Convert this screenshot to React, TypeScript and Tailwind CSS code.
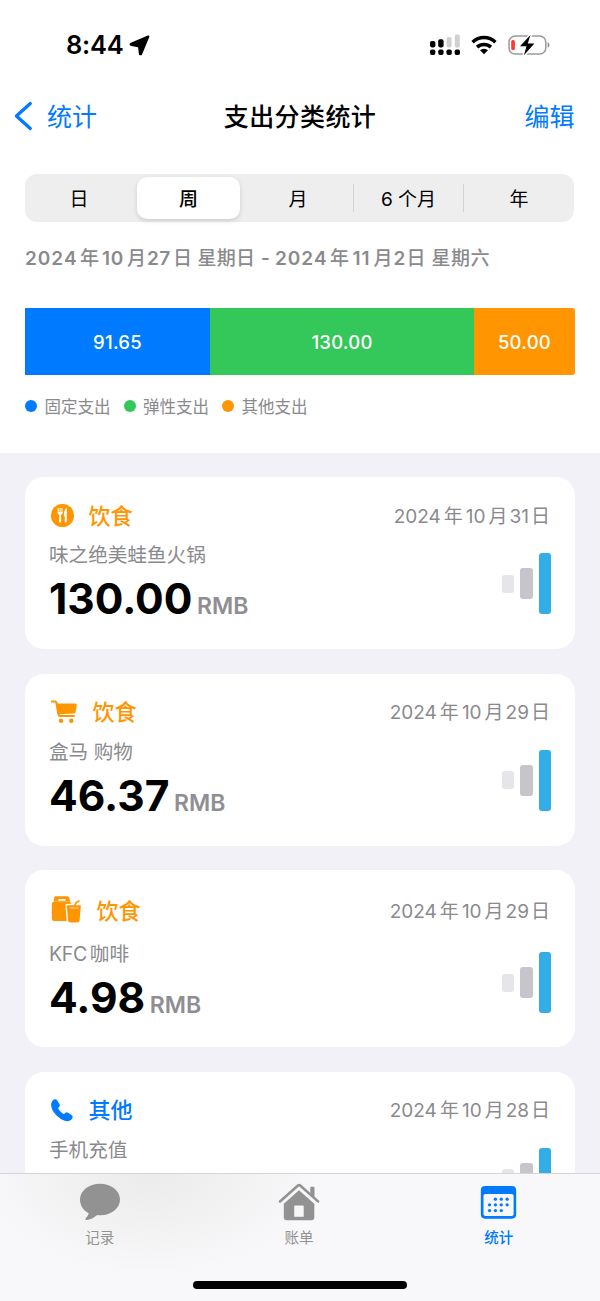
import type { ReactNode } from "react";

function LocationArrow() {
  return (
    <svg width="21" height="21" viewBox="0 0 21 21" className="ml-[5px]">
      <path d="M19.3 1.6 1.7 9l.1.7 8.3 1.800.9 7.700h.900Z" fill="#000" stroke="#000" strokeWidth="2.2" strokeLinejoin="round" />
    </svg>
  );
}

function Signal() {
  return (
    <svg width="31" height="22" viewBox="0 0 31 22">
      <g fill="#000">
        <rect x="0" y="7" width="5.4" height="6.4" rx="1.8" />
        <rect x="8.2" y="5.2" width="5.4" height="8.2" rx="1.8" />
        <rect x="0" y="15.6" width="5.4" height="5.4" rx="1.9" />
        <rect x="8.2" y="15.6" width="5.4" height="5.4" rx="1.9" />
        <rect x="16.4" y="15.6" width="5.4" height="5.4" rx="1.9" />
        <rect x="24.6" y="15.6" width="5.4" height="5.4" rx="1.9" />
      </g>
      <g fill="#d0d0d0">
        <rect x="16.6" y="3" width="5" height="10.4" rx="1.7" />
        <rect x="24.8" y="0.4" width="5" height="13" rx="1.7" />
      </g>
    </svg>
  );
}

function Wifi() {
  return (
    <svg width="26" height="20" viewBox="0 0 26 20" className="ml-[10px]">
      <g fill="none" stroke="#000" strokeWidth="3.5">
        <path d="M1.6 7.2a16.4 16.4 0 0 1 22.8 0" />
        <path d="M6.1 12.1a10.1 10.1 0 0 1 13.8 0" />
      </g>
      <path d="M13 19.2 9 15.2a5.9 5.9 0 0 1 8 0Z" fill="#000" />
    </svg>
  );
}

function Battery() {
  return (
    <svg width="43" height="22" viewBox="0 0 43 22" className="ml-[11px]">
      <rect x="1" y="1.9" width="36.8" height="18.2" rx="6.2" fill="none" stroke="#9a9a9a" strokeWidth="1.5" />
      <path d="M39.7 8.2c2.3.8 2.3 4.6 0 5.4Z" fill="#8c8c8c" />
      <rect x="3.2" y="6" width="3.7" height="10" rx="1.5" fill="#ff3b30" />
      <path d="M22.6.9 11.8 12.6h6.3l-2.2 8.8 10.6-11.8h-6.1Z" fill="#000" stroke="#fff" strokeWidth="2.8" strokeLinejoin="round" />
      <path d="M22.4 1 12 12.3h6.5l-2.6 8.9 10.5-11.6h-6.6Z" fill="#000" />
    </svg>
  );
}

function ForkKnife() {
  return (
    <svg width="25" height="25" viewBox="0 0 25 25">
      <circle cx="12.5" cy="12.5" r="11.6" fill="#ff9500" />
      <path d="M8.2 5.4v4.5M10.1 5.4v4.5M12 5.4v4.5" stroke="#fff" strokeWidth="1" strokeLinecap="round" />
      <path d="M7.7 9h4.8v.8c0 1.2-.8 1.8-1.5 2.2l.2 6.6c0 1.5-2.2 1.5-2.2 0l.2-6.6c-.8-.4-1.5-1-1.5-2.2Z" fill="#fff" />
      <path d="M16.8 5.3v13.2c0 1.6-2.1 1.6-2.1 0l.2-4.7-1-.6c-.2-3.1.7-6.3 2.1-7.9.3-.4.8-.4.8 0Z" fill="#fff" />
    </svg>
  );
}

function Cart() {
  return (
    <svg width="29" height="25" viewBox="0.800 0 28 25">
      <path d="M2.200 2.500h3.200c.8 0 1.100.4 1.300 1.200l2.100 12c.1.8.6 1.300 1.500 1.300h13.900" fill="none" stroke="#ff9500" strokeWidth="2.100" strokeLinecap="round" />
      <path d="M6.900 4.400h18.400c1.300 0 1.900.7 1.700 2l-1 6.100c-.2 1.300-1 2-2.300 2.100L8.700 15.300Z" fill="#ff9500" />
      <circle cx="11.300" cy="21.700" r="2.200" fill="#ff9500" />
      <circle cx="21.600" cy="21.700" r="2.200" fill="#ff9500" />
    </svg>
  );
}

function Takeout() {
  return (
    <svg width="33" height="28" viewBox="0.800 0.500 32 28">
      <path d="M6.200.7h11.200c1.300 0 1.800.6 2.200 1.800l1 3.500H4l.5-3.500C4.700 1.300 5.100.7 6.200.7Z" fill="#ff9500" />
      <path d="M4.100 6h15.800c1 .4 1.800 1.600 1.800 3.200v13.300c0 2-1.200 3.100-3.100 3.100H5.200c-2 0-3.100-1.100-3.100-3.100V9.200c0-1.600.8-2.800 2-3.200Z" fill="#ff9500" />
      <path d="M9.300 4.400h6" stroke="#fff" strokeWidth="1.600" strokeLinecap="round" />
      <path d="M16.900 8.200h6l1.800-3h5.800v3h1.300v19H19.200c-1.300 0-2-.7-2.200-2L15.800 11c-.2-1.600.1-2.400 1.100-2.800Z" fill="#fff" />
      <path d="M24.700 10.700 26.500 7l2.700-1.500" fill="none" stroke="#ff9500" strokeWidth="1.600" strokeLinecap="round" />
      <path d="M17.800 9.800h12.600c.5 0 .8.400.7.900l-1.200 14.100c-.1 1.400-1 2.200-2.300 2.200h-7c-1.300 0-2.100-.8-2.200-2.200l-1.300-14.100c0-.5.2-.9.700-.9Z" fill="#ff9500" />
      <path d="M20 12.500h8.400" stroke="#fff" strokeWidth=".6" strokeLinecap="round" />
    </svg>
  );
}

function Phone() {
  return (
    <svg width="25" height="24" viewBox="0.500 0 24 24">
      <path d="M2.600 2.800C4.300.9 6.100.9 7.200 2.600l2.100 3.100c.8 1.200.7 2.300-.3 3.300-.9.9-1 1.400-.4 2.300 1.200 1.800 2.600 3.200 4.200 4.300.8.6 1.300.5 2.200-.4 1-1 2.100-1.100 3.300-.3l3.100 2.100c1.700 1.100 1.800 2.800 0 4.500-2.700 2.700-6.400 2-10.900-.8C5.800 17.700 1.300 12 1.100 7.100c0-1.800.5-3.200 1.500-4.300Z" fill="#007aff" />
    </svg>
  );
}

function Bubble() {
  return (
    <svg width="42" height="38" viewBox="0 0 42 38">
      <path d="M21 .8C32.1.8 41 7.800 41 16.600S32.300 32.300 21.700 32.300c-1.200 0-2.300 0-3.300-.2-2.700 2.100-6.700 4.600-10.300 5-1.500.1-2.100-1-1.200-2.100 1.300-1.500 2.500-3.200 2.800-4.800C4.200 27.500 1 22.600 1 16.600 1 7.800 9.900.8 21 .8Z" fill="#929292" />
    </svg>
  );
}

function House() {
  return (
    <svg width="42" height="38" viewBox="0 0 42 38">
      <path d="M2 18.4 20.300 2.300c.5-.4 1.100-.4 1.600 0L40 18.400" fill="none" stroke="#929292" strokeWidth="2.600" strokeLinecap="round" strokeLinejoin="round" />
      <path d="M32.300 10V4.900c0-.8.3-1.100 1.100-1.100h2c.8 0 1.100.3 1.100 1.100v9.300Z" fill="#929292" />
      <path d="M21 7.300 36.300 20.700v13.500c0 2-1 3-3 3H8.800c-2 0-3-1-3-3V20.700Zm-3.800 15.300c-.7 0-1 .4-1 1v10.200h9.500V23.600c0-.6-.3-1-1-1Z" fill="#929292" fillRule="evenodd" />
    </svg>
  );
}

function Calendar() {
  const dots = [[15, 13.8], [20.7, 13.8], [26.4, 13.8], [9.3, 19.3], [15, 19.3], [20.7, 19.3], [26.4, 19.3], [9.3, 24.9], [15, 24.9], [20.7, 24.9]];
  return (
    <svg width="37" height="35" viewBox="0 0 36 34" className="ml-px">
      <path d="M5 1h26c2.800 0 4.200 1.400 4.200 4.200v23.300c0 2.800-1.400 4.200-4.200 4.200H5c-2.800 0-4.200-1.400-4.200-4.200V5.200C.8 2.400 2.200 1 5 1Zm.5 7.800c-1.500 0-2.100.7-2.100 2.100v17c0 1.400.7 2.200 2.100 2.200h25c1.500 0 2.200-.8 2.200-2.200v-17c0-1.400-.7-2.100-2.200-2.100Z" fill="#007aff" fillRule="evenodd" />
      {dots.map(([x, y]) => (
        <circle key={`${x}-${y}`} cx={x} cy={y} r="1.6" fill="#007aff" />
      ))}
    </svg>
  );
}

const rangeParts: [string, string][] = [
  ["2024", "w-[55px] tracking-[1px]"],
  ["年", "w-[22px]"],
  ["10", "w-[25px] tracking-[0.7px]"],
  ["月", "w-[20px]"],
  ["27", "w-[26px] tracking-[0.4px]"],
  ["日", "w-[24.5px]"],
  ["星期日", "w-[63.5px] tracking-[0.3px]"],
  ["-", "w-[14px]"],
  ["2024", "w-[55px] tracking-[1px]"],
  ["年", "w-[22.5px]"],
  ["11", "w-[21px] tracking-[1px]"],
  ["月", "w-[20px]"],
  ["2", "w-[13px]"],
  ["日", "w-[25px]"],
  ["星期六", "tracking-[0.5px]"],
];

type Entry = {
  icon: ReactNode;
  name: string;
  color: string;
  day: string;
  note: ReactNode;
  amount?: string;
  box: string;
  head: string;
};

const entries: Entry[] = [
  { icon: <ForkKnife />, name: "饮食", color: "text-[#ff9500]", day: "10-31", note: "味之绝美蛙鱼火锅", amount: "130.00", box: "h-[172px] pt-[22px]", head: "mb-[8px]" },
  { icon: <Cart />, name: "饮食", color: "text-[#ff9500]", day: "10-29", note: "盒马 购物", amount: "46.37", box: "h-[172px] pt-[22px]", head: "mb-[8px]" },
  { icon: <Takeout />, name: "饮食", color: "text-[#ff9500]", day: "10-29", note: <><span className="mr-[3px] tracking-[-0.4px]">KFC</span>咖啡</>, amount: "4.98", box: "h-[177px] pt-[24px]", head: "mb-[12px]" },
  { icon: <Phone />, name: "其他", color: "text-[#007aff]", day: "10-28", note: "手机充值", box: "h-[172px] pt-[22px]", head: "mb-[8px]" },
];

function Card({ entry }: { entry: Entry }) {
  const [month, day] = entry.day.split("-");
  return (
    <article className={`shrink-0 rounded-[19px] bg-white pr-[24px] pl-[25px] ${entry.box}`}>
      <header className={`flex h-8 items-center ${entry.head}`}>
        {entry.icon}
        <h2 className={`ml-[13.5px] pt-px text-[22px] leading-8 font-medium ${entry.color}`}>{entry.name}</h2>
        <p className="ml-auto pt-[4px] pr-px text-[19px] text-[#8a8a8e]">
          <span className="mr-[3px]">2024</span>年<span className="mx-[3px]">{month}</span>月<span className="mx-[2px]">{day}</span>日
        </p>
      </header>
      <div className="flex justify-between">
        <div className="-ml-px">
          <p className="h-8 text-[19.6px] leading-8 text-[#8a8a8e]">{entry.note}</p>
          {entry.amount && (
            <p className="flex h-[55px] items-baseline leading-[56px]">
              <span className="text-[42.5px] font-bold text-black">{entry.amount}</span>
              <span className="ml-[4.5px] text-[23px] font-semibold text-[#8e8e93]">RMB</span>
            </p>
          )}
        </div>
        <div className="mt-[14px] flex h-[61px] items-center gap-[6px]">
          <i className="h-[18px] w-[12.5px] rounded-[3px] bg-[#e5e5ea]" />
          <i className="h-[31px] w-[12.5px] rounded-[3px] bg-[#c5c5cb]" />
          <i className="h-[61px] w-[12.5px] rounded-[3px] bg-[#32ade6]" />
        </div>
      </div>
    </article>
  );
}

export default function App() {
  return (
    <div className="flex h-[1301px] w-[600px] flex-col overflow-hidden bg-white font-['Inter','Noto_Sans_CJK_SC',sans-serif]">
      <div className="flex h-[90px] shrink-0 items-center pr-[49px] pl-[66px]">
        <span className="text-[25.5px] font-semibold tracking-[-0.2px]">8:44</span>
        <LocationArrow />
        <div className="ml-auto flex items-center">
          <Signal />
          <Wifi />
          <Battery />
        </div>
      </div>

      <nav className="grid h-[52px] shrink-0 grid-cols-[1fr_auto_1fr] items-center px-[14px] text-[25px]">
        <div className="flex items-center text-[#007aff]">
          <svg width="19" height="30" viewBox="0 0 19 30">
            <path d="M16.300 2.600 2.400 15l13.900 12.400" fill="none" stroke="currentColor" strokeWidth="3.300" strokeLinecap="round" strokeLinejoin="round" />
          </svg>
          <span className="ml-[14px] pt-[3px]">统计</span>
        </div>
        <h1 className="pt-[3px] font-medium tracking-[0.4px]">支出分类统计</h1>
        <span className="mr-[11.5px] justify-self-end pt-[3px] text-[#007aff]">编辑</span>
      </nav>

      <div className="mx-[25px] mt-[32px] flex h-[48px] w-[549px] shrink-0 rounded-[12px] bg-[#eeeeef] py-[3px] text-[19px]">
        <span className="flex w-[108px] items-center justify-center pt-[4px]">日</span>
        <span className="mr-[3px] ml-[4px] flex w-[103px] items-center justify-center rounded-[10px] bg-white pt-[4px] font-medium shadow-[0_2px_5px_rgba(0,0,0,0.14)]">周</span>
        <span className="flex w-[110px] items-center justify-center pt-[4px]">月</span>
        <i className="my-[7px] w-px bg-[#d2d2d5]" />
        <span className="flex w-[109px] items-center justify-center gap-[5px] pt-[4px]"><span>6</span>个月</span>
        <i className="my-[7px] w-px bg-[#d2d2d5]" />
        <span className="flex w-[110px] items-center justify-center pt-[4px]">年</span>
      </div>

      <p className="mt-[22px] ml-[25px] flex h-[30px] shrink-0 text-[19px] leading-[30px] whitespace-nowrap text-[#8a8a8e]">
        {rangeParts.map(([text, width], i) => (
          <span key={i} className={`shrink-0 ${/[0-9-]/.test(text) ? "font-semibold" : "font-medium"} ${width}`}>{text}</span>
        ))}
      </p>

      <div className="mt-[34px] ml-[25px] flex h-[67px] w-[550px] shrink-0 overflow-hidden rounded-r-[3px] text-[18.5px] font-medium tracking-[0.25px] text-white">
        <span className="flex w-[185px] items-center justify-center bg-[#007aff] pt-[2px]">91.65</span>
        <span className="flex w-[264px] items-center justify-center bg-[#34c759] pt-[2px]">130.00</span>
        <span className="flex flex-1 items-center justify-center bg-[#ff9500] pt-[2px]">50.00</span>
      </div>

      <div className="mt-[16px] ml-[25px] flex h-[30px] shrink-0 items-center gap-[13px] text-[16.5px] text-[#8a8a8e]">
        <span className="flex items-center gap-[7.5px]"><i className="size-[12px] rounded-full bg-[#007aff]" /><span className="pt-[2px]">固定支出</span></span>
        <span className="flex items-center gap-[7.5px]"><i className="size-[12px] rounded-full bg-[#34c759]" /><span className="pt-[2px]">弹性支出</span></span>
        <span className="flex items-center gap-[7.5px]"><i className="size-[12px] rounded-full bg-[#ff9500]" /><span className="pt-[2px]">其他支出</span></span>
      </div>

      <main className="mt-[32px] flex min-h-0 flex-1 flex-col gap-[24.5px] overflow-hidden bg-[#f2f1f7] px-[25px] pt-[24px]">
        {entries.map((entry, i) => (
          <Card key={i} entry={entry} />
        ))}
      </main>

      <footer className="flex h-[128px] shrink-0 flex-col items-center border-t border-[#d5d5d8] bg-[#f8f8fa] bg-[radial-gradient(ellipse_170px_100px_at_150px_0px,#ebebeb,#f8f8fa)]">
        <div className="grid w-full grid-cols-3 pr-[2px] text-center text-[14.5px] text-[#929292]">
          <div className="flex flex-col items-center"><div className="flex h-[56px] items-center"><Bubble /></div><span className="leading-[16px]">记录</span></div>
          <div className="flex flex-col items-center"><div className="flex h-[56px] items-center"><House /></div><span className="leading-[16px]">账单</span></div>
          <div className="flex flex-col items-center text-[#007aff]"><div className="flex h-[56px] items-center"><Calendar /></div><span className="pl-px leading-[16px] font-medium">统计</span></div>
        </div>
        <div className="mt-[35px] h-[8px] w-[214px] rounded-full bg-black" />
      </footer>
    </div>
  );
}
